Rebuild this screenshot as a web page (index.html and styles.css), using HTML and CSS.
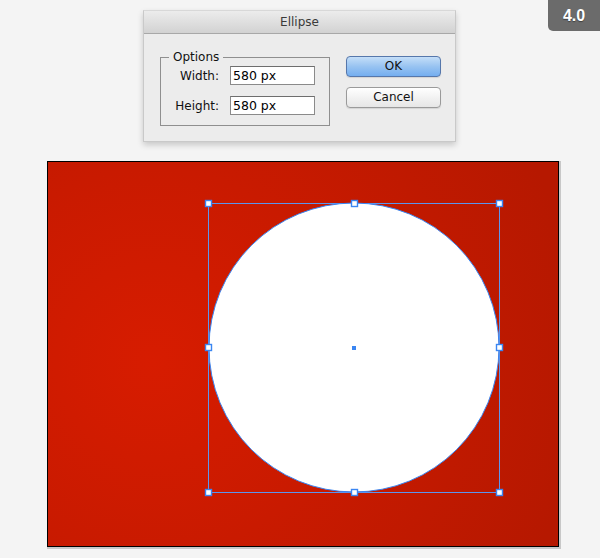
FILE: index.html
```html
<!DOCTYPE html>
<html>
<head>
<meta charset="utf-8">
<link rel="stylesheet" href="styles.css">
</head>
<body>
<div class="badge">4.0</div>
<div class="dialog">
  <div class="titlebar">Ellipse</div>
  <div class="dialog-body">
    <fieldset class="options">
      <legend>Options</legend>
      <div class="row"><label>Width:</label><div class="field">580 px</div></div>
      <div class="row"><label>Height:</label><div class="field">580 px</div></div>
    </fieldset>
    <div class="buttons">
      <div class="btn btn-primary">OK</div>
      <div class="btn">Cancel</div>
    </div>
  </div>
</div>
<div class="canvas">
  <svg width="510" height="384" viewBox="0 0 510 384">
    <defs>
      <radialGradient id="bg" cx="105" cy="200" r="430" gradientUnits="userSpaceOnUse">
        <stop offset="0" stop-color="#d71c00"/>
        <stop offset="0.45" stop-color="#c91a00"/>
        <stop offset="1" stop-color="#b61800"/>
      </radialGradient>
    </defs>
    <rect x="0" y="0" width="510" height="384" fill="url(#bg)"/>
    <rect x="160.5" y="41.5" width="291" height="289" fill="none" stroke="#5b95ee" stroke-width="1"/>
    <ellipse cx="306" cy="185.5" rx="145" ry="144.5" fill="#fff" stroke="#3a86f2" stroke-width="1"/>
    <g fill="#fff" stroke="#3a86f2" stroke-width="1.4">
      <rect x="157.5" y="38.5" width="6" height="6"/>
      <rect x="303.5" y="38.5" width="6" height="6"/>
      <rect x="448.5" y="38.5" width="6" height="6"/>
      <rect x="157.5" y="182.5" width="6" height="6"/>
      <rect x="448.5" y="182.5" width="6" height="6"/>
      <rect x="157.5" y="327.5" width="6" height="6"/>
      <rect x="303.5" y="327.5" width="6" height="6"/>
      <rect x="448.5" y="327.5" width="6" height="6"/>
    </g>
    <rect x="304" y="184" width="4" height="4" fill="#3a86f2"/>
  </svg>
</div>
</body>
</html>
```
FILE: styles.css
```css
html, body {
  margin: 0;
  padding: 0;
}
body {
  background: #f4f4f4;
  width: 600px;
  height: 558px;
  overflow: hidden;
  padding-top: 10px;
  box-sizing: border-box;
  font-family: "DejaVu Sans", "Liberation Sans", sans-serif;
  position: relative;
}
.badge {
  position: absolute;
  top: 0;
  right: 0;
  width: 52px;
  height: 31px;
  background: #6b6b6b;
  border-bottom-left-radius: 5px;
  color: #fff;
  font-family: "Liberation Sans", Arial, sans-serif;
  font-weight: bold;
  font-size: 16px;
  display: flex;
  align-items: center;
  justify-content: center;
  text-shadow: 0 1px 1px rgba(0,0,0,0.4);
}
.dialog {
  margin-left: 143px;
  width: 313px;
  height: 132px;
  box-sizing: border-box;
  background: #ececec;
  border: 1px solid #c9c9c9;
  border-top-color: #d8d8d8;
  box-shadow: 0 3px 6px rgba(0,0,0,0.18);
  display: flex;
  flex-direction: column;
}
.titlebar {
  height: 22px;
  background: linear-gradient(#ececec, #d2d2d2);
  border-bottom: 1px solid #a8a8a8;
  text-align: center;
  font-size: 12px;
  line-height: 22px;
  color: #3a3a3a;
}
.dialog-body {
  display: flex;
  padding: 15px 14px 0 16px;
  gap: 16px;
}
.options {
  margin: 0;
  width: 170px;
  height: 77px;
  box-sizing: border-box;
  border: 1px solid #8f8f8f;
  padding: 1px 0 0 0;
  display: flex;
  flex-direction: column;
  gap: 11px;
}
.options legend {
  margin-left: 8px;
  padding: 0 4px;
  font-size: 12px;
  color: #111;
  line-height: 16px;
}
.row {
  display: flex;
  align-items: center;
  gap: 11px;
}
.row label {
  width: 58px;
  text-align: right;
  font-size: 12px;
  color: #111;
}
.field {
  width: 85px;
  height: 19px;
  box-sizing: border-box;
  background: #fff;
  border: 1px solid #8a8a8a;
  border-top-color: #6e6e6e;
  font-size: 12.5px;
  line-height: 17px;
  padding-left: 2px;
  color: #000;
}
.buttons {
  display: flex;
  flex-direction: column;
  gap: 10px;
  padding-top: 7px;
}
.btn {
  width: 95px;
  height: 21px;
  box-sizing: border-box;
  border: 1px solid #9a9a9a;
  border-radius: 4px;
  background: linear-gradient(#ffffff, #f2f2f2 50%, #e6e6e6);
  font-size: 12px;
  line-height: 19px;
  text-align: center;
  color: #111;
  box-shadow: 0 1px 1px rgba(0,0,0,0.1);
}
.btn-primary {
  border-color: #5677ab;
  background: linear-gradient(#c4def8, #98c3f1 50%, #74aef0);
}
.canvas {
  margin-left: 47px;
  margin-top: 19px;
  width: 512px;
  height: 386px;
  box-sizing: border-box;
  border: 1px solid #000;
  box-shadow: 1px 1px 0 1px #c8c8c8;
  display: flex;
}
.canvas svg {
  display: block;
}
```
